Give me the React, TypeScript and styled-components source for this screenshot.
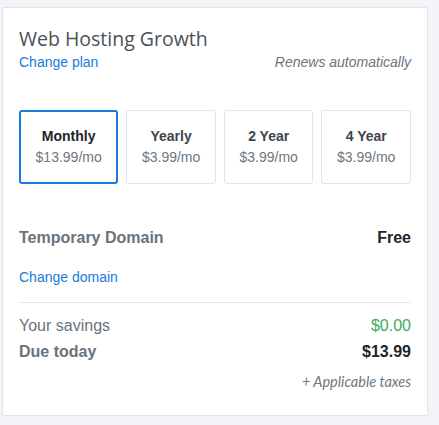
import styled, { createGlobalStyle } from 'styled-components'

const GlobalStyle = createGlobalStyle`
  html, body {
    margin: 0;
    padding: 0;
    background: #f3f4f8;
  }
  body {
    font-family: "Liberation Sans", Arial, sans-serif;
  }
`

interface Plan {
  name: string
  price: string
}

const plans: Plan[] = [
  { name: 'Monthly', price: '$13.99/mo' },
  { name: 'Yearly', price: '$3.99/mo' },
  { name: '2 Year', price: '$3.99/mo' },
  { name: '4 Year', price: '$3.99/mo' },
]

export default function App() {
  return (
    <>
      <GlobalStyle />
      <Page>
        <Card>
          <Title>Web Hosting Growth</Title>
          <HeaderRow>
            <Link href="#">Change plan</Link>
            <Note>Renews automatically</Note>
          </HeaderRow>

          <PlanList>
            {plans.map((p, i) => (
              <PlanBox key={p.name} $selected={i === 0}>
                <PlanName $selected={i === 0}>{p.name}</PlanName>
                <PlanPrice>{p.price}</PlanPrice>
              </PlanBox>
            ))}
          </PlanList>

          <DomainRow>
            <Label $bold>Temporary Domain</Label>
            <Value>Free</Value>
          </DomainRow>
          <DomainLink href="#">Change domain</DomainLink>

          <Divider />

          <SummaryRow>
            <Label>Your savings</Label>
            <Savings>$0.00</Savings>
          </SummaryRow>
          <SummaryRow $tight>
            <Label $bold>Due today</Label>
            <Value>$13.99</Value>
          </SummaryRow>
          <Taxes>+ Applicable taxes</Taxes>
        </Card>
      </Page>
    </>
  )
}

const Page = styled.div`
  padding: 7px 0 0 2px;
`

const Card = styled.div`
  width: 426px;
  height: 409px;
  box-sizing: border-box;
  background: #ffffff;
  border: 1px solid #e0e3e8;
  border-radius: 2px;
  padding: 19px 16px 0 16px;
  display: flex;
  flex-direction: column;
`

const Title = styled.h1`
  margin: 0;
  font-family: "Open Sans", sans-serif;
  font-weight: 400;
  font-size: 19.5px;
  line-height: 24px;
  color: #4a5158;
`

const HeaderRow = styled.div`
  display: flex;
  justify-content: space-between;
  align-items: center;
  margin-top: 2px;
  line-height: 18px;
`

const Link = styled.a`
  font-size: 14px;
  color: #1a7ae0;
  text-decoration: none;
`

const Note = styled.span`
  font-size: 14px;
  font-style: italic;
  color: #6c757f;
`

const PlanList = styled.div`
  display: flex;
  gap: 8px;
  margin-top: 39px;
`

const PlanBox = styled.div<{ $selected?: boolean }>`
  flex: 1 1 auto;
  height: 74px;
  box-sizing: border-box;
  border: ${(p) => (p.$selected ? '2px solid #1a7ae0' : '1px solid #e2e5e9')};
  border-radius: 3px;
  display: flex;
  flex-direction: column;
  align-items: center;
  justify-content: center;
  gap: 4px;
  padding: 0 10px;
`

const PlanName = styled.div<{ $selected?: boolean }>`
  font-size: 14px;
  font-weight: 700;
  color: ${(p) => (p.$selected ? '#1f2429' : '#3d454e')};
  line-height: 17px;
`

const PlanPrice = styled.div`
  font-size: 14px;
  color: #6c7782;
  line-height: 17px;
`

const DomainRow = styled.div`
  display: flex;
  justify-content: space-between;
  align-items: center;
  margin-top: 44px;
  line-height: 20px;
`

const Label = styled.span<{ $bold?: boolean }>`
  font-size: 16px;
  font-weight: ${(p) => (p.$bold ? 700 : 400)};
  color: #68737e;
`

const Value = styled.span`
  font-size: 16px;
  font-weight: 700;
  color: #1f2429;
`

const Savings = styled.span`
  font-size: 16px;
  color: #3aad5a;
`

const DomainLink = styled.a`
  align-self: flex-start;
  margin-top: 20px;
  font-size: 14px;
  line-height: 18px;
  color: #1a7ae0;
  text-decoration: none;
`

const Divider = styled.div`
  height: 1px;
  background: #e3e5e8;
  margin-top: 16px;
`

const SummaryRow = styled.div<{ $tight?: boolean }>`
  display: flex;
  justify-content: space-between;
  align-items: center;
  margin-top: ${(p) => (p.$tight ? '6px' : '13px')};
  line-height: 20px;
`

const Taxes = styled.div`
  align-self: flex-end;
  margin-top: 11px;
  font-family: Lato, sans-serif;
  font-size: 14.5px;
  font-style: italic;
  color: #6c7782;
  line-height: 18px;
`
